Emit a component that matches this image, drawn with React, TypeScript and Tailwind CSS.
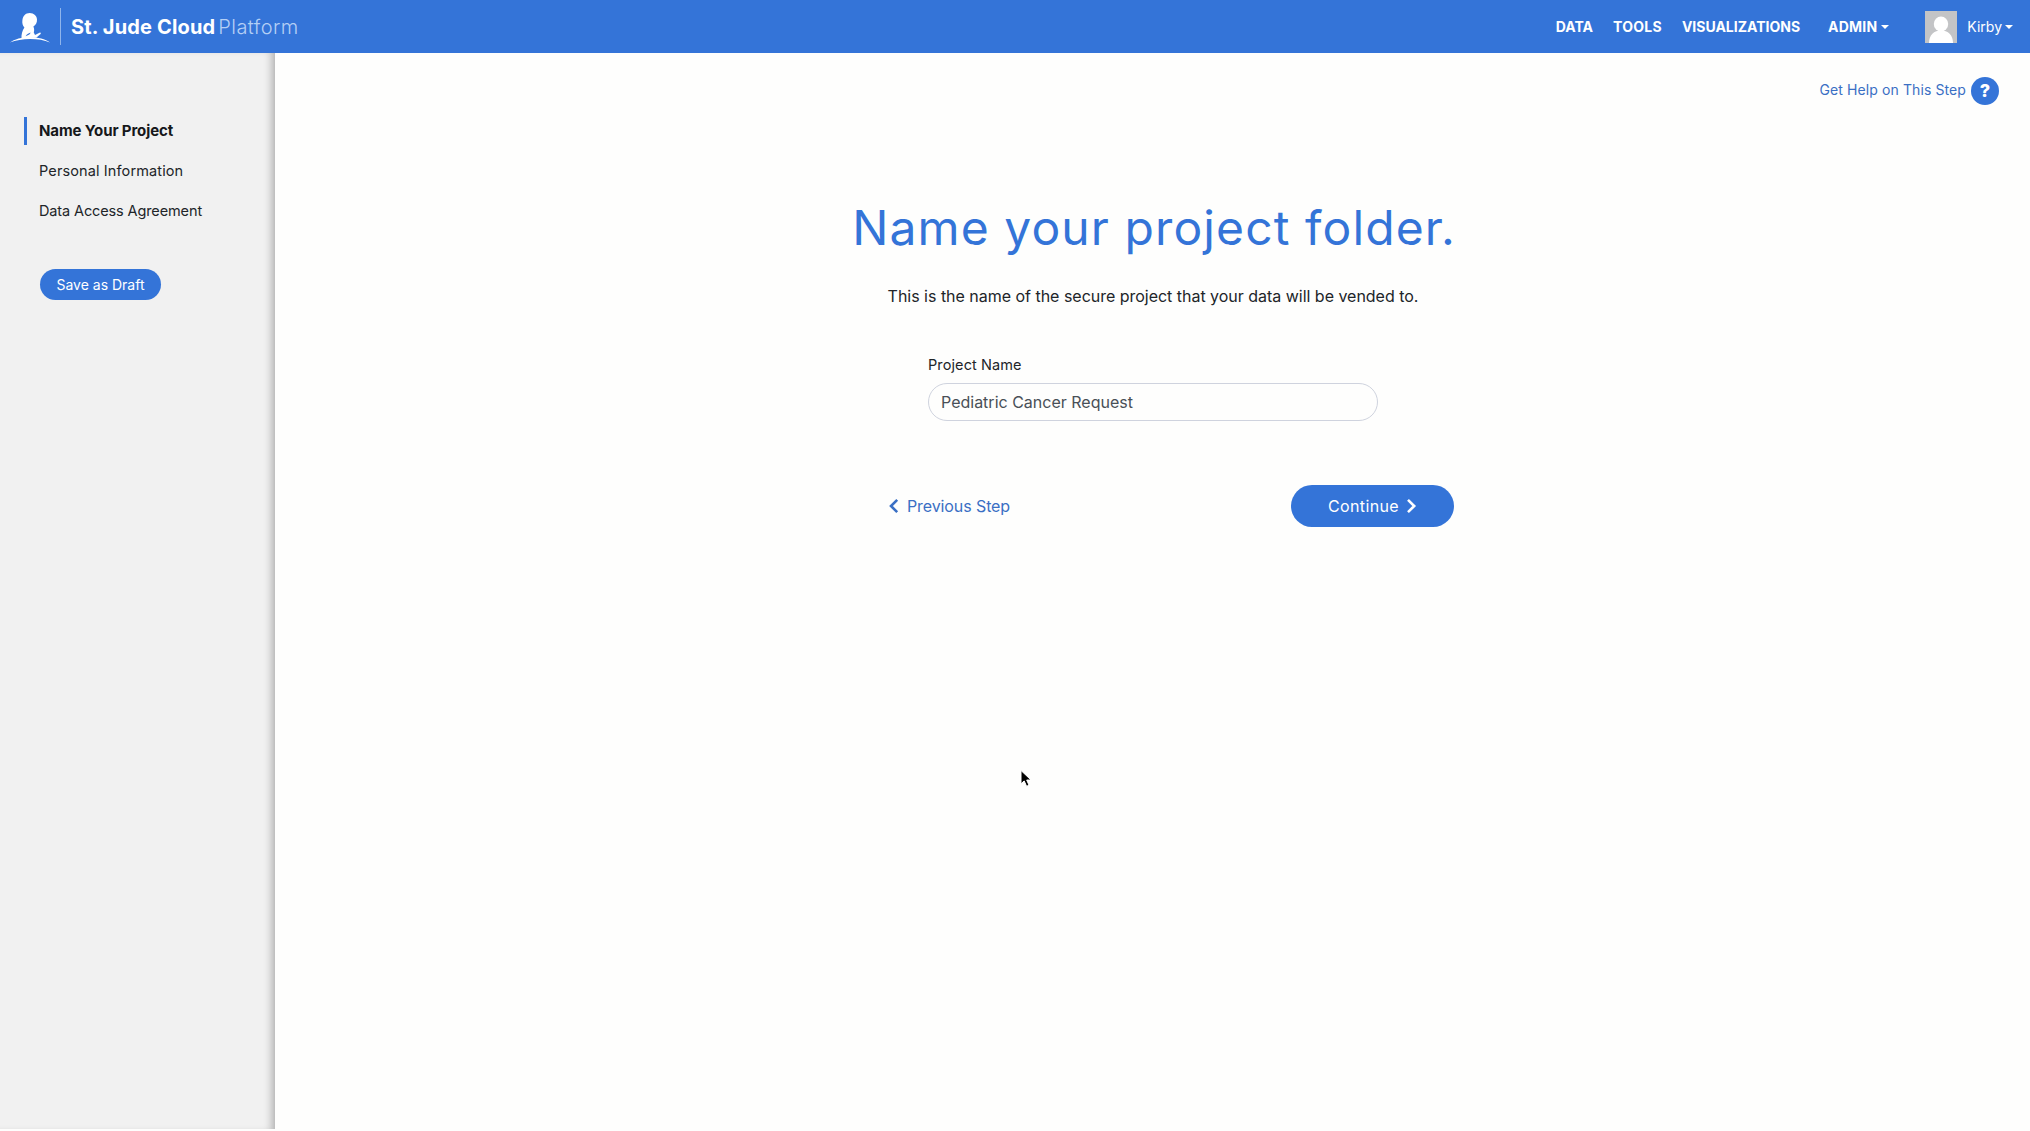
import type { ReactNode } from "react";

function Caret() {
  return <span className="block h-0 w-0 border-x-4 border-t-4 border-x-transparent border-t-white" />;
}

function Logo() {
  return (
    <svg className="h-[32px] w-[42px]" viewBox="0 0 42 32" fill="#fff">
      <path d="M1 31.6 C9 24.6 32 24.2 41 31.6 C30 26.9 12 27 1 31.6Z" />
      <path d="M12.5 27.2 C12.3 23.5 13.2 19.8 15.4 16.4 C13.6 14.6 13 12 13.4 9.2 C13.8 4.8 16.8 2 20.6 2 C25 2 28 5 28 8.6 C28.2 12 26.6 14 24.4 15.6 C25.2 17.4 25.4 19.4 24.8 21.4 L26 24 L31 21.4 C32.2 21.6 32 22.8 31 23.6 L27.2 26.8Z" />
      <path d="M16.6 25.2 C17.4 23.6 19.4 22.6 21.6 21.6 C21.4 23 20 24 16.6 25.2Z" fill="#3474d8" />
    </svg>
  );
}

function Avatar() {
  return (
    <svg className="size-8" viewBox="0 0 32 32">
      <rect width="32" height="32" fill="#c3c4c6" />
      <path d="M4 32 C4 24 9 19.5 16 19.5 S28 24 28 32Z" fill="#fff" />
      <ellipse cx="16" cy="13" rx="7.2" ry="7.6" fill="#fff" />
    </svg>
  );
}

function Chevron({ left }: { left?: boolean }) {
  return (
    <svg className="h-4 w-[11px]" viewBox="0 0 11 16" fill="none" stroke="currentColor" strokeWidth="2.6">
      <path d={left ? "M9.2 1.8 L3 8 L9.2 14.2" : "M2 1.8 L8.2 8 L2 14.2"} />
    </svg>
  );
}

function Step({ active, tight, children }: { active?: boolean; tight?: boolean; children: ReactNode }) {
  return (
    <a
      className={
        active
          ? "block h-7 border-l-[3px] border-[#3474d8] pl-3 text-[15px] leading-7 font-bold tracking-[-0.1px] text-[#16181b]"
          : tight
            ? "block h-7 border-l-[3px] border-transparent pl-3 text-[14.5px] leading-7 tracking-[-0.12px] text-[#212529]"
            : "block h-7 border-l-[3px] border-transparent pl-3 text-[14.5px] leading-7 tracking-[0.12px] text-[#212529]"
      }
    >
      {children}
    </a>
  );
}

export default function App() {
  return (
    <div className="flex h-[1131px] w-[2030px] flex-col overflow-hidden bg-[#fefefd] font-['Inter',sans-serif] text-[#212529]">
      <header className="flex h-[53px] shrink-0 items-center bg-[#3474d8] text-white">
        <div className="ml-[9px]">
          <Logo />
        </div>
        <div className="ml-[9px] h-[37px] w-px bg-[#8fb5ec]" />
        <div className="ml-[10px] flex text-[20px] leading-6">
          <span className="font-bold tracking-[0.15px]">St. Jude Cloud</span>
          <span className="ml-[3px] font-light tracking-[0.45px] text-[#b4cff5]">Platform</span>
        </div>
        <nav className="ml-auto flex items-center text-[14px] font-bold">
          <a>DATA</a>
          <a className="ml-5 tracking-[0.25px]">TOOLS</a>
          <a className="ml-5">VISUALIZATIONS</a>
          <a className="ml-7 flex items-center gap-1 tracking-[0.2px]">
            ADMIN <Caret />
          </a>
        </nav>
        <div className="mr-[17px] ml-9 flex items-center">
          <Avatar />
          <span className="mr-[3px] ml-[10px] text-[14px]">Kirby</span>
          <Caret />
        </div>
      </header>

      <div className="flex h-[1076px]">
        <aside className="w-[275px] shrink-0 bg-[#f1f1f1] pt-16 shadow-[inset_-8px_0_8px_-5px_rgba(0,0,0,0.28)]">
          <nav className="ml-6 flex flex-col gap-3">
            <Step active>Name Your Project</Step>
            <Step>Personal Information</Step>
            <Step tight>Data Access Agreement</Step>
          </nav>
          <button className="mt-11 ml-10 block h-[31px] w-[121px] rounded-full bg-[#3474d8] text-[14px] leading-[31px] text-white">
            Save as Draft
          </button>
        </aside>

        <main className="flex grow flex-col items-center">
          <div className="mt-6 mr-[31px] flex h-7 items-center gap-[5px] self-end text-[14px] tracking-[0.1px] text-[#3a6fc4]">
            <span className="-mt-[3px]">Get Help on This Step</span>
            <span className="flex size-7 items-center justify-center rounded-full bg-[#3474d8] text-[18px] leading-7 font-extrabold text-white">
              ?
            </span>
          </div>

          <div className="mt-[93px] ml-px flex w-[602px] flex-col items-center">
            <h1 className="ml-[2px] text-[48px] leading-[60px] font-normal tracking-[1.1px] whitespace-nowrap text-[#3474d8]">
              Name your project folder.
            </h1>
            <p className="mt-[26px] text-[16px] leading-6 tracking-[-0.02px] whitespace-nowrap">
              This is the name of the secure project that your data will be vended to.
            </p>
            <div className="mt-[47px] w-[450px]">
              <label className="block text-[14.5px] leading-5 tracking-[0.1px]">Project Name</label>
              <div className="mt-2 flex h-[38px] items-center rounded-full border border-[#cfd3de] px-3 text-[16px] text-[#495057]">
                Pediatric Cancer Request
              </div>
            </div>
            <div className="mt-16 flex w-full items-center justify-between pl-[36px] text-[16px]">
              <a className="flex items-center gap-2 tracking-[-0.1px] text-[#3a6fc4]">
                <Chevron left />
                Previous Step
              </a>
              <button className="flex h-[42px] w-[163px] items-center justify-center gap-[7px] rounded-full bg-[#3474d8] tracking-[0.35px] text-white">
                Continue
                <Chevron />
              </button>
            </div>
          </div>
        </main>
      </div>

      <svg className="absolute top-[769px] left-[1019px] h-[20px] w-[14px]" viewBox="0 0 14 20">
        <path
          d="M2 1.5 V14.8 L5.2 11.9 L7.6 17.3 L10 16.2 L7.7 11 H12Z"
          fill="#000"
          stroke="#fff"
          strokeWidth="1"
        />
      </svg>
    </div>
  );
}
